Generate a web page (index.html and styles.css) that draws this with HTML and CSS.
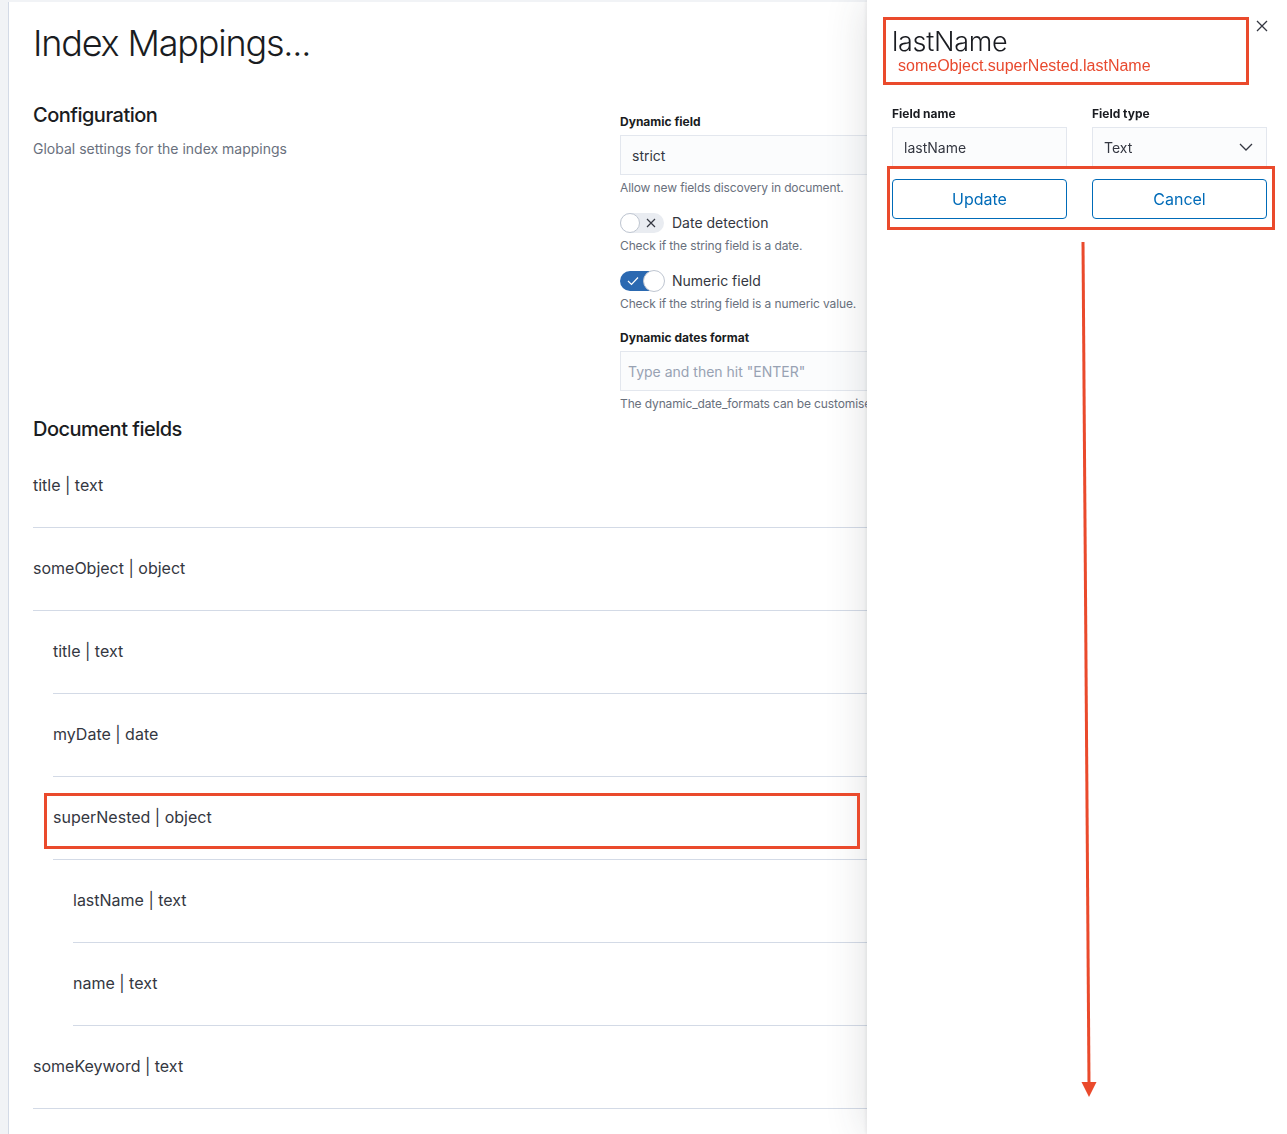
FILE: index.html
```html
<!DOCTYPE html>
<html lang="en">
<head>
    <meta charset="UTF-8">
    <meta name="viewport" content="width=device-width, initial-scale=1.0">
    <title>Index Mappings</title>
    <link rel="stylesheet" href="styles.css">
</head>
<body>
    <div class="page">
        <h1 class="page-title">Index Mappings...</h1>

        <!-- Global configuration -->
        <section class="config">
            <div class="config-desc">
                <h2 class="section-title">Configuration</h2>
                <p class="section-text">Global settings for the index mappings</p>
            </div>
            <div class="config-fields">
                <div class="form-label">Dynamic field</div>
                <div class="input">strict</div>
                <p class="help">Allow new fields discovery in document.</p>

                <div class="switch-row">
                    <span class="switch">
                        <span class="switch-knob"></span>
                        <svg class="switch-icon icon-cross" width="10" height="10" viewBox="0 0 10 10">
                            <path d="M1 1 L9 9 M9 1 L1 9" stroke="#343741" stroke-width="1.2" fill="none"/>
                        </svg>
                    </span>
                    <span class="switch-label">Date detection</span>
                </div>
                <p class="help help-switch">Check if the string field is a date.</p>

                <div class="switch-row">
                    <span class="switch switch-on">
                        <svg class="switch-icon icon-check" width="12" height="10" viewBox="0 0 12 10">
                            <path d="M1 5 L4.5 8.5 L11 1.5" stroke="#fff" stroke-width="1.2" fill="none"/>
                        </svg>
                        <span class="switch-knob"></span>
                    </span>
                    <span class="switch-label">Numeric field</span>
                </div>
                <p class="help help-switch">Check if the string field is a numeric value.</p>

                <div class="form-label label-gap">Dynamic dates format</div>
                <div class="input placeholder">Type and then hit "ENTER"</div>
                <p class="help">The dynamic_date_formats can be customised</p>
            </div>
        </section>

        <!-- Document fields tree -->
        <h2 class="section-title doc-title">Document fields</h2>
        <ul class="fields">
            <li class="field">title | text</li>
            <li class="field">someObject | object</li>
            <li>
                <ul class="fields nested">
                    <li class="field">title | text</li>
                    <li class="field">myDate | date</li>
                    <li class="field">superNested | object</li>
                    <li>
                        <ul class="fields nested">
                            <li class="field">lastName | text</li>
                            <li class="field">name | text</li>
                        </ul>
                    </li>
                </ul>
            </li>
            <li class="field">someKeyword | text</li>
        </ul>
    </div>

    <!-- Edit field flyout -->
    <aside class="flyout">
        <svg class="flyout-close" width="12" height="12" viewBox="0 0 12 12">
            <path d="M1 1 L11 11 M11 1 L1 11" stroke="#343741" stroke-width="1.3" fill="none"/>
        </svg>
        <h3 class="flyout-title">lastName</h3>
        <div class="flyout-path">someObject.superNested.lastName</div>

        <div class="flyout-form">
            <div class="flyout-col">
                <div class="form-label">Field name</div>
                <div class="input">lastName</div>
            </div>
            <div class="flyout-col">
                <div class="form-label">Field type</div>
                <div class="input select">
                    <span>Text</span>
                    <svg width="14" height="8" viewBox="0 0 14 8">
                        <path d="M1 1 L7 7 L13 1" stroke="#343741" stroke-width="1.3" fill="none"/>
                    </svg>
                </div>
            </div>
            <button class="btn">Update</button>
            <button class="btn">Cancel</button>
        </div>
    </aside>

    <!-- Red review annotations drawn over the screenshot -->
    <div class="notes">
        <div class="note-box note-title"></div>
        <div class="note-box note-buttons"></div>
        <div class="note-box note-row"></div>
        <svg class="note-arrow" width="1287" height="1134" viewBox="0 0 1287 1134">
            <line x1="1083" y1="242" x2="1089" y2="1084" stroke="#ea4a2c" stroke-width="3"/>
            <polygon points="1081.5,1082 1096.5,1082 1089,1097" fill="#ea4a2c"/>
        </svg>
    </div>
</body>
</html>
```

FILE: styles.css
```css
body {
    margin: 0;
    padding: 0;
    background-color: #f1f3f6;
    font-family: Inter, "Noto Sans", sans-serif;
    color: #343741;
    overflow: hidden;
}

.page {
    margin: 2px 0 0 8px;
    padding: 17px 24px 0;
    min-height: 1134px;
    background-color: #fff;
    border-left: 1px solid #d3dae6;
}

.page-title {
    margin: 0;
    font-size: 36px;
    line-height: 48px;
    font-weight: 300;
    letter-spacing: -0.033em;
    color: #1a1c21;
}

.section-title {
    margin: 0;
    font-size: 20px;
    line-height: 24px;
    font-weight: 500;
    letter-spacing: -0.025em;
    color: #1a1c21;
}

.section-text {
    margin: 12px 0 0;
    font-size: 14px;
    line-height: 20px;
    color: #69707d;
}

.config {
    display: grid;
    grid-template-columns: 587px 1fr;
    margin-top: 36px;
}

.config-fields {
    padding-top: 11px;
}

.form-label {
    font-size: 12px;
    line-height: 16px;
    font-weight: 700;
    color: #1a1c21;
}

.label-gap {
    margin-top: 18px;
}

.input {
    box-sizing: border-box;
    height: 40px;
    margin-top: 5px;
    padding: 0 11px;
    display: flex;
    align-items: center;
    font-size: 14px;
    color: #343741;
    background-color: #fbfcfd;
    border: 1px solid #e3e7ee;
}

.placeholder {
    padding-left: 7px;
    color: #98a2b3;
}

.help {
    margin: 5px 0 0;
    font-size: 12px;
    line-height: 16px;
    letter-spacing: -0.01em;
    color: #69707d;
    white-space: nowrap;
}

.switch-row {
    display: flex;
    align-items: center;
    gap: 8px;
    height: 20px;
    margin-top: 17px;
}

.switch {
    position: relative;
    display: flex;
    align-items: center;
    justify-content: space-between;
    box-sizing: border-box;
    width: 44px;
    height: 20px;
    border-radius: 10px;
    background-color: #e9ecf1;
}

.switch-on {
    background-color: #2b69b1;
}

.switch-knob {
    box-sizing: border-box;
    width: 20px;
    height: 20px;
    border-radius: 50%;
    background-color: #fff;
    border: 1px solid #bfc6d1;
}

.switch-on .switch-knob {
    width: 22px;
    height: 22px;
    margin-right: -1px;
}

.icon-cross {
    margin-right: 8px;
}

.icon-check {
    margin-left: 7px;
}

.switch-label {
    font-size: 14px;
    line-height: 20px;
}

.help-switch {
    margin-top: 5px;
}

.doc-title {
    margin-top: 5px;
}

.fields {
    list-style: none;
    margin: 4px 0 0;
    padding: 0;
}

.fields.nested {
    margin: 0 0 0 20px;
}

.field {
    padding: 28px 0 30px;
    font-size: 16px;
    line-height: 24px;
    border-bottom: 1px solid #d3dae6;
}

/* Flyout over the page */
.flyout {
    position: fixed;
    top: 0;
    right: 0;
    bottom: 0;
    width: 420px;
    box-sizing: border-box;
    padding: 26px 20px 0 25px;
    background-color: #fff;
    box-shadow: 0 0 40px rgba(52, 55, 65, 0.16), -1px 0 4px rgba(52, 55, 65, 0.08);
}

.flyout-close {
    position: absolute;
    top: 20px;
    right: 19px;
}

.flyout-title {
    margin: 0;
    font-size: 27px;
    line-height: 32px;
    font-weight: 300;
    letter-spacing: -0.01em;
    color: #1a1c21;
}

.flyout-path {
    margin: -2px 0 0 6px;
    font-family: "Liberation Sans", Arial, sans-serif;
    font-size: 16px;
    line-height: 20px;
    color: #e8492e;
}

.flyout-form {
    display: grid;
    grid-template-columns: 175px 175px;
    column-gap: 25px;
    row-gap: 12px;
    margin-top: 29px;
}

.flyout-col .form-label {
    padding-top: 1px;
}

.flyout-col .input {
    margin-top: 5px;
}

.select {
    justify-content: space-between;
    padding-right: 13px;
}

.btn {
    height: 40px;
    background-color: #fff;
    color: #006bb8;
    font-family: Inter, "Noto Sans", sans-serif;
    font-size: 16px;
    border: 1px solid #006bb8;
    border-radius: 4px;
    cursor: pointer;
}

/* Annotations */
.notes {
    position: absolute;
    top: 0;
    left: 0;
    width: 1287px;
    height: 1134px;
    pointer-events: none;
}

.note-box {
    position: absolute;
    box-sizing: border-box;
    border: 3px solid #ea4a2c;
}

.note-title {
    left: 883px;
    top: 17px;
    width: 366px;
    height: 68px;
}

.note-buttons {
    left: 887px;
    top: 166px;
    width: 388px;
    height: 64px;
}

.note-row {
    left: 44px;
    top: 793px;
    width: 816px;
    height: 56px;
}

.note-arrow {
    position: absolute;
    top: 0;
    left: 0;
}
```
